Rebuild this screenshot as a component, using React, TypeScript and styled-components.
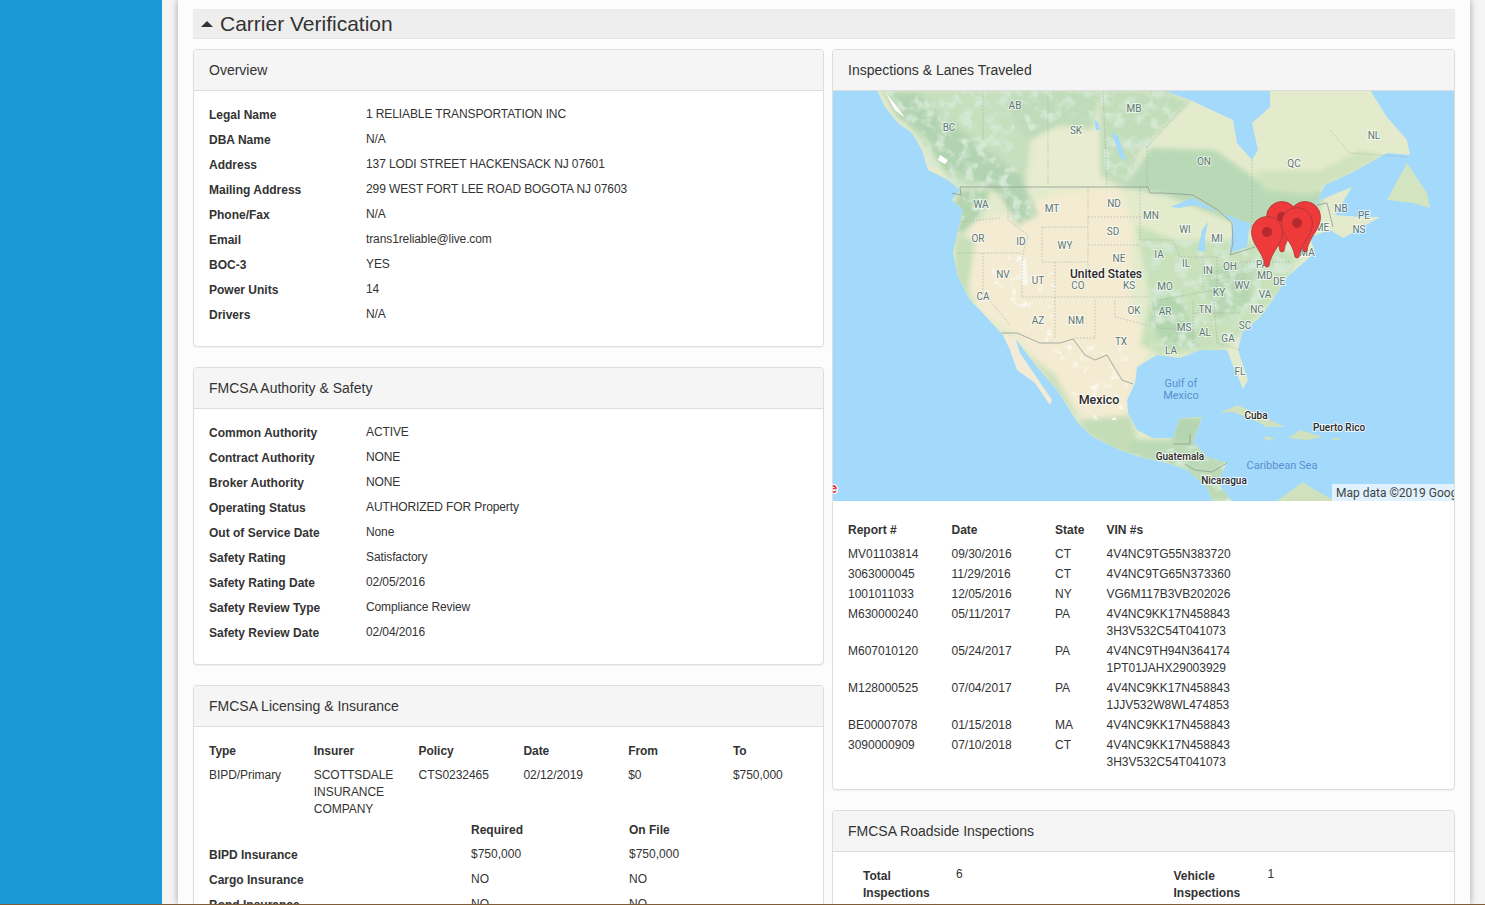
import React from 'react';
import styled, { createGlobalStyle } from 'styled-components';

const GlobalStyle = createGlobalStyle`
  html, body {
    margin: 0;
    height: 905px;
    overflow: hidden;
    background: #f5f5f5;
    font-family: "Liberation Sans", Arial, sans-serif;
    font-size: 12px;
    line-height: 17px;
    color: #333;
  }
`;

const Page = styled.div`
  display: flex;
  flex-direction: column;
  height: 905px;
`;

const Shell = styled.div`
  display: flex;
  height: 904px;
  overflow: hidden;
`;

const DeskEdge = styled.div`
  height: 1px;
  background: #7d5c3c;
`;

const Sidebar = styled.div`
  flex: 0 0 162px;
  background: #1b99d6;
`;

const Main = styled.div`
  flex: 0 0 1292px;
  margin-left: 16px;
  padding: 9px 15px 0;
  box-sizing: border-box;
  background: #fcfcfc;
  box-shadow: 0 0 7px rgba(0, 0, 0, 0.35);
`;

const SectionBar = styled.div`
  display: flex;
  align-items: center;
  gap: 7px;
  height: 30px;
  padding-left: 8px;
  box-sizing: border-box;
  background: #eee;
  border-bottom: 1px solid #e4e4e4;
`;

const Caret = styled.span`
  width: 0;
  height: 0;
  border-left: 6px solid transparent;
  border-right: 6px solid transparent;
  border-bottom: 6px solid #333;
`;

const SectionTitle = styled.h2`
  margin: 0;
  font-size: 21px;
  font-weight: 400;
  line-height: 30px;
  color: #333;
`;

const Columns = styled.div`
  display: grid;
  grid-template-columns: 631px 623px;
  gap: 8px;
  margin-top: 10px;
`;

const Column = styled.div`
  display: flex;
  flex-direction: column;
  gap: 20px;
`;

const Panel = styled.section`
  background: #fff;
  border: 1px solid #ddd;
  border-radius: 4px;
  box-shadow: 0 1px 1px rgba(0, 0, 0, 0.05);
  overflow: hidden;
`;

const PanelHeading = styled.h3`
  margin: 0;
  height: 41px;
  padding-left: 15px;
  box-sizing: border-box;
  background: #f5f5f5;
  border-bottom: 1px solid #ddd;
  font-size: 14px;
  font-weight: 400;
  line-height: 40px;
  color: #333;
`;

const PanelBody = styled.div`
  padding: 15px 15px 15px;
`;

const InfoRow = styled.div`
  display: grid;
  grid-template-columns: 157px 1fr;
  height: 25px;
`;

const InfoKey = styled.div`
  padding-top: 1px;
  font-weight: 700;
`;

const InfoValue = styled.div`
  letter-spacing: -0.11px;
`;

const SixColumns = styled.div`
  display: grid;
  grid-template-columns: repeat(6, 104.8px);
  row-gap: 7px;
  padding-top: 1px;
  letter-spacing: -0.05px;
`;

const HeadCell = styled.div`
  font-weight: 700;
`;

const CoverageHead = styled.div`
  display: grid;
  grid-template-columns: 262px 158px 1fr;
  margin-top: 4px;
  height: 24px;
  font-weight: 700;
`;

const CoverageRow = styled.div`
  display: grid;
  grid-template-columns: 262px 158px 1fr;
  height: 25px;
`;

const ReportTable = styled.div`
  padding: 21px 15px 15px;
`;

const ReportRow = styled.div<{ $head?: boolean }>`
  display: grid;
  grid-template-columns: 103.5px 103.5px 51.5px 1fr;
  padding-bottom: ${props => (props.$head ? '7px' : '3px')};
  font-weight: ${props => (props.$head ? 700 : 400)};
`;

const RoadsideBody = styled.div`
  padding: 14px 15px 16px 30px;
`;

const RoadsideGrid = styled.div`
  display: grid;
  grid-template-columns: 93px 217.5px 94px 1fr;
`;

const RoadsideKey = styled.div`
  padding-top: 2px;
  font-weight: 700;
`;

const MapFrame = styled.div`
  height: 410px;
  background: #a3d9fb;
`;

const MapSvg = styled.svg`
  display: block;
  width: 622px;
  height: 410px;
`;

const overview = [
  ['Legal Name', '1 RELIABLE TRANSPORTATION INC'],
  ['DBA Name', 'N/A'],
  ['Address', '137 LODI STREET HACKENSACK NJ 07601'],
  ['Mailing Address', '299 WEST FORT LEE ROAD BOGOTA NJ 07603'],
  ['Phone/Fax', 'N/A'],
  ['Email', 'trans1reliable@live.com'],
  ['BOC-3', 'YES'],
  ['Power Units', '14'],
  ['Drivers', 'N/A'],
];

const authority = [
  ['Common Authority', 'ACTIVE'],
  ['Contract Authority', 'NONE'],
  ['Broker Authority', 'NONE'],
  ['Operating Status', 'AUTHORIZED FOR Property'],
  ['Out of Service Date', 'None'],
  ['Safety Rating', 'Satisfactory'],
  ['Safety Rating Date', '02/05/2016'],
  ['Safety Review Type', 'Compliance Review'],
  ['Safety Review Date', '02/04/2016'],
];

const reports = [
  ['MV01103814', '09/30/2016', 'CT', ['4V4NC9TG55N383720']],
  ['3063000045', '11/29/2016', 'CT', ['4V4NC9TG65N373360']],
  ['1001011033', '12/05/2016', 'NY', ['VG6M117B3VB202026']],
  ['M630000240', '05/11/2017', 'PA', ['4V4NC9KK17N458843', '3H3V532C54T041073']],
  ['M607010120', '05/24/2017', 'PA', ['4V4NC9TH94N364174', '1PT01JAHX29003929']],
  ['M128000525', '07/04/2017', 'PA', ['4V4NC9KK17N458843', '1JJV532W8WL474853']],
  ['BE00007078', '01/15/2018', 'MA', ['4V4NC9KK17N458843']],
  ['3090000909', '07/10/2018', 'CT', ['4V4NC9KK17N458843', '3H3V532C54T041073']],
] as [string, string, string, string[]][];

const coverage = [
  ['BIPD Insurance', '$750,000', '$750,000'],
  ['Cargo Insurance', 'NO', 'NO'],
  ['Bond Insurance', 'NO', 'NO'],
];

// everything on the map is in page coordinates, the viewBox does the offset
const stateLabels: [string, number, number][] = [
  ['AB', 1015, 105], ['MB', 1134, 108], ['BC', 949, 127], ['SK', 1076, 130], ['NL', 1374, 135],
  ['ON', 1204, 161], ['QC', 1294, 163], ['WA', 981, 204], ['MT', 1052, 208], ['ND', 1114, 203],
  ['MN', 1151, 215], ['WI', 1185, 229], ['SD', 1113, 231], ['MI', 1217, 238], ['OR', 978, 238],
  ['ID', 1021, 241], ['WY', 1065, 245], ['IA', 1159, 254], ['NE', 1119, 258], ['IL', 1186, 263],
  ['IN', 1208, 270], ['OH', 1230, 266], ['NV', 1003, 274], ['UT', 1038, 280], ['CO', 1078, 285],
  ['KS', 1129, 285], ['MO', 1165, 286], ['CA', 983, 296], ['KY', 1219, 292], ['WV', 1242, 285],
  ['VA', 1265, 294], ['NC', 1257, 309], ['OK', 1134, 310], ['AR', 1165, 311], ['TN', 1205, 309],
  ['AZ', 1038, 320], ['NM', 1076, 320], ['MS', 1184, 327], ['AL', 1205, 332], ['SC', 1245, 325],
  ['GA', 1228, 338], ['TX', 1121, 341], ['LA', 1171, 350], ['FL', 1240, 371], ['ME', 1322, 227],
  ['NB', 1341, 208], ['PE', 1364, 215], ['NS', 1359, 229], ['MA', 1307, 252], ['PA', 1262, 264],
  ['MD', 1265, 275], ['DE', 1279, 281],
];

const placeLabels: [string, number, number, number, number][] = [
  ['United States', 1106, 274, 12, 500],
  ['Mexico', 1099, 399, 12.5, 500],
  ['Cuba', 1256, 415, 10, 500],
  ['Puerto Rico', 1339, 427, 10, 500],
  ['Guatemala', 1180, 456, 10, 500],
  ['Nicaragua', 1224, 480, 10, 500],
];

const landPath =
  'M877 90 L885 107 L898 123 L912 133 L922 150 L928 170 L948 180 L960 190 L952 200 L963 210 L958 230 L953 253 L958 277 L970 300 L980 310 L1000 332 L1018 342 L1037 367 L1057 390 L1078 423 L1093 437 L1120 450 L1140 457 L1167 463 L1187 470 L1207 487 L1213 501 L1232 501 L1223 490 L1217 482 L1227 463 L1207 457 L1193 442 L1202 417 L1180 418 L1173 438 L1153 438 L1137 430 L1128 413 L1127 400 L1135 383 L1137 367 L1157 355 L1180 358 L1200 350 L1227 350 L1232 363 L1243 389 L1248 380 L1238 350 L1242 333 L1260 317 L1273 300 L1287 277 L1310 257 L1315 253 L1310 237 L1330 230 L1343 238 L1380 217 L1360 217 L1335 215 L1352 187 L1320 200 L1310 215 L1325 185 L1353 172 L1387 153 L1410 155 L1407 140 L1387 117 L1370 90 Z';

const islands: [string, string][] = [
  ['M1002 333 L1010 350 L1017 370 L1035 383 L1050 405 L1052 400 L1035 375 L1020 353 L1015 338 Z', '#f2ecd6'],
  ['M1387 200 L1407 163 L1427 193 L1430 208 L1413 203 Z', '#d3e4c0'],
  ['M1220 413 L1237 405 L1260 415 L1285 427 L1267 427 L1250 418 L1232 412 Z', '#cfe2bd'],
  ['M1288 438 L1300 430 L1323 437 L1307 440 Z', '#cfe2bd'],
  ['M1262 436 L1275 438 L1268 441 Z', '#cfe2bd'],
  ['M1277 501 L1303 482 L1310 487 L1333 500 L1333 501 Z', '#cfe2bd'],
  ['M1329 438 L1340 438 L1338 441 Z', '#cfe2bd'],
];

const water = [
  'M1163 90 L1190 100 L1233 120 L1237 143 L1252 160 L1258 150 L1252 123 L1270 107 L1270 90 Z',
  'M1170 207 L1193 198 L1218 212 L1205 208 L1193 205 L1180 208 Z',
  'M1198 250 L1202 230 L1208 222 L1205 237 L1205 252 Z',
  'M1222 213 L1233 222 L1230 253 L1247 247 L1250 223 L1240 220 Z',
  'M1112 132 L1118 136 L1126 160 L1120 158 Z',
  'M1094 120 L1098 122 L1100 130 L1096 130 Z',
];

const borderDashes = [
  'M1008 187 L1008 220 L1028 235 L1022 257 L1022 297',
  'M1088 187 L1088 280', 'M1088 217 L1140 217', 'M1088 245 L1140 245',
  'M1042 227 L1088 227', 'M1042 227 L1042 262 L1088 262', 'M958 253 L1022 253',
  'M983 253 L983 292 L1010 325', 'M960 222 L1000 218', 'M1055 262 L1055 338',
  'M1022 297 L1148 297', 'M1095 300 L1095 338 L1073 338', 'M1115 300 L1115 317 L1147 325',
  'M1152 300 L1157 328 L1193 330', 'M1193 300 L1193 343', 'M1193 313 L1240 313',
  'M1217 343 L1214 300', 'M1217 343 L1240 350', 'M1140 187 L1140 240 L1173 240 L1180 257 L1217 257',
  'M1203 257 L1203 290', 'M1217 257 L1217 290', 'M1252 160 L1252 236', 'M1147 147 L1190 100',
  'M1147 147 L1147 187', 'M983 90 L983 140', 'M1048 90 L1048 187', 'M1103 90 L1107 187',
  'M1330 130 L1350 153 L1407 157', 'M1160 300 L1230 287', 'M1240 262 L1290 262',
];

function Pin({ x, y }: { x: number; y: number }) {
  return (
    <g transform={`translate(${x} ${y})`}>
      <path
        d="M-2 -1 C-4 -16 -15.5 -22 -15.5 -35 A15.5 15.5 0 1 1 15.5 -35 C15.5 -22 4 -16 2 -1 Q0 1 -2 -1 Z"
        fill="#ee3a3a"
        stroke="#a93a3a"
        strokeWidth="0.8"
      />
      <circle cx="0" cy="-35" r="5" fill="#b42a2d" />
    </g>
  );
}

function RouteMap() {
  return (
    <MapFrame>
      <MapSvg viewBox="833 91 622 410">
        <defs>
          <filter id="soft" x="-5%" y="-5%" width="110%" height="110%">
            <feGaussianBlur stdDeviation="0.6" />
          </filter>
          <filter id="zones" x="-5%" y="-5%" width="110%" height="110%">
            <feGaussianBlur stdDeviation="2.5" />
          </filter>
          {/* patchy terrain, dark where the noise is high */}
          <filter id="mottleDark" x="0" y="0" width="100%" height="100%">
            <feTurbulence type="fractalNoise" baseFrequency="0.08" numOctaves="3" seed="7" />
            <feColorMatrix values="0 0 0 0 0.66  0 0 0 0 0.81  0 0 0 0 0.66  4 0 0 0 -1.9" />
            <feGaussianBlur stdDeviation="0.6" />
          </filter>
          <filter id="mottleLight" x="0" y="0" width="100%" height="100%">
            <feTurbulence type="fractalNoise" baseFrequency="0.11" numOctaves="3" seed="3" />
            <feColorMatrix values="0 0 0 0 0.97  0 0 0 0 0.96  0 0 0 0 0.9  5 0 0 0 -3" />
            <feGaussianBlur stdDeviation="0.5" />
          </filter>
          <clipPath id="mainland">
            <path d={landPath} />
          </clipPath>
          <clipPath id="forest">
            <path d="M885 90 L1010 90 L1020 175 L1040 220 L1016 228 L1000 195 L960 240 L950 200 L920 150 Z" />
            <path d="M1015 90 L1100 90 L1092 122 L1060 118 L1030 132 Z" />
            <path d="M1100 90 L1160 90 L1190 105 L1150 150 L1125 185 L1105 170 Z" />
            <path d="M1140 240 L1290 240 L1300 255 L1240 335 L1230 350 L1150 352 L1150 300 Z" />
            <path d="M1120 455 L1240 440 L1240 501 L1200 501 L1170 470 Z" />
          </clipPath>
          <clipPath id="drylands">
            <path d="M985 250 L1060 260 L1050 345 L1130 345 L1125 420 L1090 420 L1040 345 L985 300 Z" />
          </clipPath>
        </defs>
        <g filter="url(#soft)">
          <path d={landPath} fill="#e4ebcd" />
          {islands.map(([d, fill]) => (
            <path key={d} d={d} fill={fill} />
          ))}
          <g clipPath="url(#mainland)">
            <g filter="url(#zones)">
              {/* british columbia and the coast */}
              <path d="M880 90 L1015 90 L1030 140 L1025 187 L955 187 L920 140 Z" fill="#c6dfbd" />
              {/* dry country in the west */}
              <path
                d="M972 222 L1005 215 L1060 192 L1120 188 L1132 225 L1130 300 L1150 345 L1135 385 L1125 420 L1110 440 L1085 420 L1050 375 L1015 335 L980 310 L960 265 Z"
                fill="#f3ebd2"
              />
              <path d="M1040 130 L1100 130 L1105 187 L1030 187 Z" fill="#e8ecd0" />
              {/* green belts */}
              <path
                d="M1125 188 L1150 148 L1215 150 L1262 183 L1310 183 L1325 195 L1310 232 L1270 240 L1240 225 L1215 215 L1165 195 Z"
                fill="#b9d9b6"
              />
              <path d="M1100 90 L1165 90 L1190 102 L1140 150 L1125 190 L1100 175 Z" fill="#c2ddba" />
              <path d="M1015 90 L1100 90 L1092 130 L1060 125 L1030 140 L1010 115 Z" fill="#bfdbb9" />
              <path
                d="M1136 225 L1175 240 L1250 240 L1300 255 L1275 300 L1240 335 L1225 350 L1160 355 L1140 345 L1150 300 Z"
                fill="#c8e1bb"
              />
              <path d="M1155 290 L1180 300 L1200 345 L1165 350 L1150 320 Z" fill="#b4d6af" />
              <path d="M1205 270 L1255 262 L1250 305 L1215 320 Z" fill="#b7d7b2" />
              <path d="M1255 170 L1320 170 L1360 150 L1385 155 L1340 180 L1310 195 L1265 190 Z" fill="#d0e3be" />
              {/* the rockies */}
              <path
                d="M885 95 L915 92 L960 130 L1020 175 L1038 215 L1018 225 L1000 195 L975 180 L945 170 L925 135 L898 118 Z"
                fill="#b2d3b1"
              />
              <path d="M960 190 L990 190 L982 215 L960 235 L950 215 Z" fill="#b2d4ae" />
              <path d="M955 235 L975 240 L968 290 L975 305 L955 285 Z" fill="#c7dfba" />
              {/* mexico */}
              <path d="M1022 350 L1055 375 L1080 420 L1070 410 L1040 370 Z" fill="#cbe0bc" />
              <path d="M1078 420 L1130 415 L1140 450 L1140 458 L1110 450 L1085 432 Z" fill="#c4ddb7" />
              <path d="M1130 400 L1140 365 L1160 355 L1135 385 Z" fill="#d9e7c6" />
              <path d="M1130 440 L1240 440 L1240 501 L1200 501 L1170 465 L1130 458 Z" fill="#bcdab5" />
              <path d="M1172 417 L1205 417 L1195 442 L1172 440 Z" fill="#b4d5b0" />
            </g>
            <g clipPath="url(#forest)">
              <rect x="833" y="91" width="622" height="410" filter="url(#mottleDark)" />
            </g>
            <g clipPath="url(#drylands)">
              <rect x="833" y="91" width="622" height="410" filter="url(#mottleLight)" />
            </g>
            {/* snow */}
            <path d="M940 155 L948 160 L945 164 L938 160 Z M885 92 L898 108 L905 118 L895 110 Z" fill="#ffffff" />
            <path d="M1020 262 L1026 258 L1028 285 L1022 285 Z" fill="#f9f8ef" />
          </g>
          {water.map(d => (
            <path key={d} d={d} fill="#a3d9fb" />
          ))}
        </g>

        <g fill="none" stroke="#8f9f93" strokeOpacity="0.8" strokeWidth="0.6" strokeDasharray="1.6 1.6">
          {borderDashes.map(d => (
            <path key={d} d={d} />
          ))}
        </g>
        <g fill="none" stroke="#8f9a96" strokeWidth="0.8">
          <path d="M960 187 L1148 187 L1150 193 L1163 193 L1193 195 L1218 210 L1232 223 L1233 243 L1230 255 L1255 247" />
          <path d="M960 187 L961 195 L952 193" />
          <path d="M1002 333 L1017 333 L1040 343 L1060 343 L1073 339 L1085 355 L1095 360 L1107 355 L1122 380 L1133 384" />
          <path d="M1317 205 L1327 203 L1333 227" />
          <path d="M1173 444 L1190 444 L1190 434 M1185 464 L1195 470 L1212 472 L1227 463" />
        </g>

        <g
          fontFamily="Roboto, sans-serif"
          fontSize="10"
          fill="#5c7672"
          stroke="#ffffff"
          strokeOpacity="0.65"
          strokeWidth="2"
          paintOrder="stroke"
          textAnchor="middle"
          dominantBaseline="central"
        >
          {stateLabels.map(([name, x, y]) => (
            <text key={name} x={x} y={y}>
              {name}
            </text>
          ))}
        </g>
        <g
          fontFamily="Roboto, sans-serif"
          fill="#2b2b2b"
          stroke="#ffffff"
          strokeOpacity="0.75"
          strokeWidth="2"
          paintOrder="stroke"
          textAnchor="middle"
          dominantBaseline="central"
        >
          {placeLabels.map(([name, x, y, size, weight]) => (
            <text key={name} x={x} y={y} fontSize={size} fontWeight={weight}>
              {name}
            </text>
          ))}
        </g>
        <g fontFamily="Roboto, sans-serif" fontSize="11" fill="#5b8fd0" textAnchor="middle" dominantBaseline="central">
          <text x="1181" y="383">Gulf of</text>
          <text x="1181" y="395">Mexico</text>
          <text x="1282" y="465">Caribbean Sea</text>
        </g>

        <Pin x={1282} y={252} />
        <Pin x={1305} y={252} />
        <Pin x={1297} y={258} />
        <Pin x={1267} y={267} />

        <text
          x="829"
          y="493"
          fontFamily="Roboto, sans-serif"
          fontSize="15"
          fontWeight="700"
          fill="#ea3535"
          stroke="#ffffff"
          strokeWidth="2"
          paintOrder="stroke"
        >
          e
        </text>
        <rect x="1332" y="484" width="123" height="17" fill="#ffffff" fillOpacity="0.65" />
        <text x="1336" y="497" fontFamily="Roboto, sans-serif" fontSize="12" fill="#444">
          Map data ©2019 Google
        </text>
      </MapSvg>
    </MapFrame>
  );
}

export default function App() {
  return (
    <Page>
      <GlobalStyle />
      <Shell>
        <Sidebar />
        <Main>
          <SectionBar>
            <Caret />
            <SectionTitle>Carrier Verification</SectionTitle>
          </SectionBar>
          <Columns>
            <Column>
              <Panel>
                <PanelHeading>Overview</PanelHeading>
                <PanelBody>
                  {overview.map(([key, value]) => (
                    <InfoRow key={key}>
                      <InfoKey>{key}</InfoKey>
                      <InfoValue>{value}</InfoValue>
                    </InfoRow>
                  ))}
                </PanelBody>
              </Panel>
              <Panel>
                <PanelHeading>FMCSA Authority &amp; Safety</PanelHeading>
                <PanelBody>
                  {authority.map(([key, value]) => (
                    <InfoRow key={key}>
                      <InfoKey>{key}</InfoKey>
                      <InfoValue>{value}</InfoValue>
                    </InfoRow>
                  ))}
                </PanelBody>
              </Panel>
              <Panel>
                <PanelHeading>FMCSA Licensing &amp; Insurance</PanelHeading>
                <PanelBody>
                  <SixColumns>
                    {['Type', 'Insurer', 'Policy', 'Date', 'From', 'To'].map(name => (
                      <HeadCell key={name}>{name}</HeadCell>
                    ))}
                    <div>BIPD/Primary</div>
                    <div>SCOTTSDALE INSURANCE COMPANY</div>
                    <div>CTS0232465</div>
                    <div>02/12/2019</div>
                    <div>$0</div>
                    <div>$750,000</div>
                  </SixColumns>
                  <CoverageHead>
                    <div />
                    <div>Required</div>
                    <div>On File</div>
                  </CoverageHead>
                  {coverage.map(([name, required, onFile]) => (
                    <CoverageRow key={name}>
                      <InfoKey>{name}</InfoKey>
                      <div>{required}</div>
                      <div>{onFile}</div>
                    </CoverageRow>
                  ))}
                </PanelBody>
              </Panel>
            </Column>
            <Column>
              <Panel>
                <PanelHeading>Inspections &amp; Lanes Traveled</PanelHeading>
                <RouteMap />
                <ReportTable>
                  <ReportRow $head>
                    <div>Report #</div>
                    <div>Date</div>
                    <div>State</div>
                    <div>VIN #s</div>
                  </ReportRow>
                  {reports.map(([report, date, state, vins]) => (
                    <ReportRow key={report}>
                      <div>{report}</div>
                      <div>{date}</div>
                      <div>{state}</div>
                      <div>
                        {vins.map(vin => (
                          <div key={vin}>{vin}</div>
                        ))}
                      </div>
                    </ReportRow>
                  ))}
                </ReportTable>
              </Panel>
              <Panel>
                <PanelHeading>FMCSA Roadside Inspections</PanelHeading>
                <RoadsideBody>
                  <RoadsideGrid>
                    <RoadsideKey>Total<br />Inspections</RoadsideKey>
                    <div>6</div>
                    <RoadsideKey>Vehicle<br />Inspections</RoadsideKey>
                    <div>1</div>
                  </RoadsideGrid>
                </RoadsideBody>
              </Panel>
            </Column>
          </Columns>
        </Main>
      </Shell>
      <DeskEdge />
    </Page>
  );
}
